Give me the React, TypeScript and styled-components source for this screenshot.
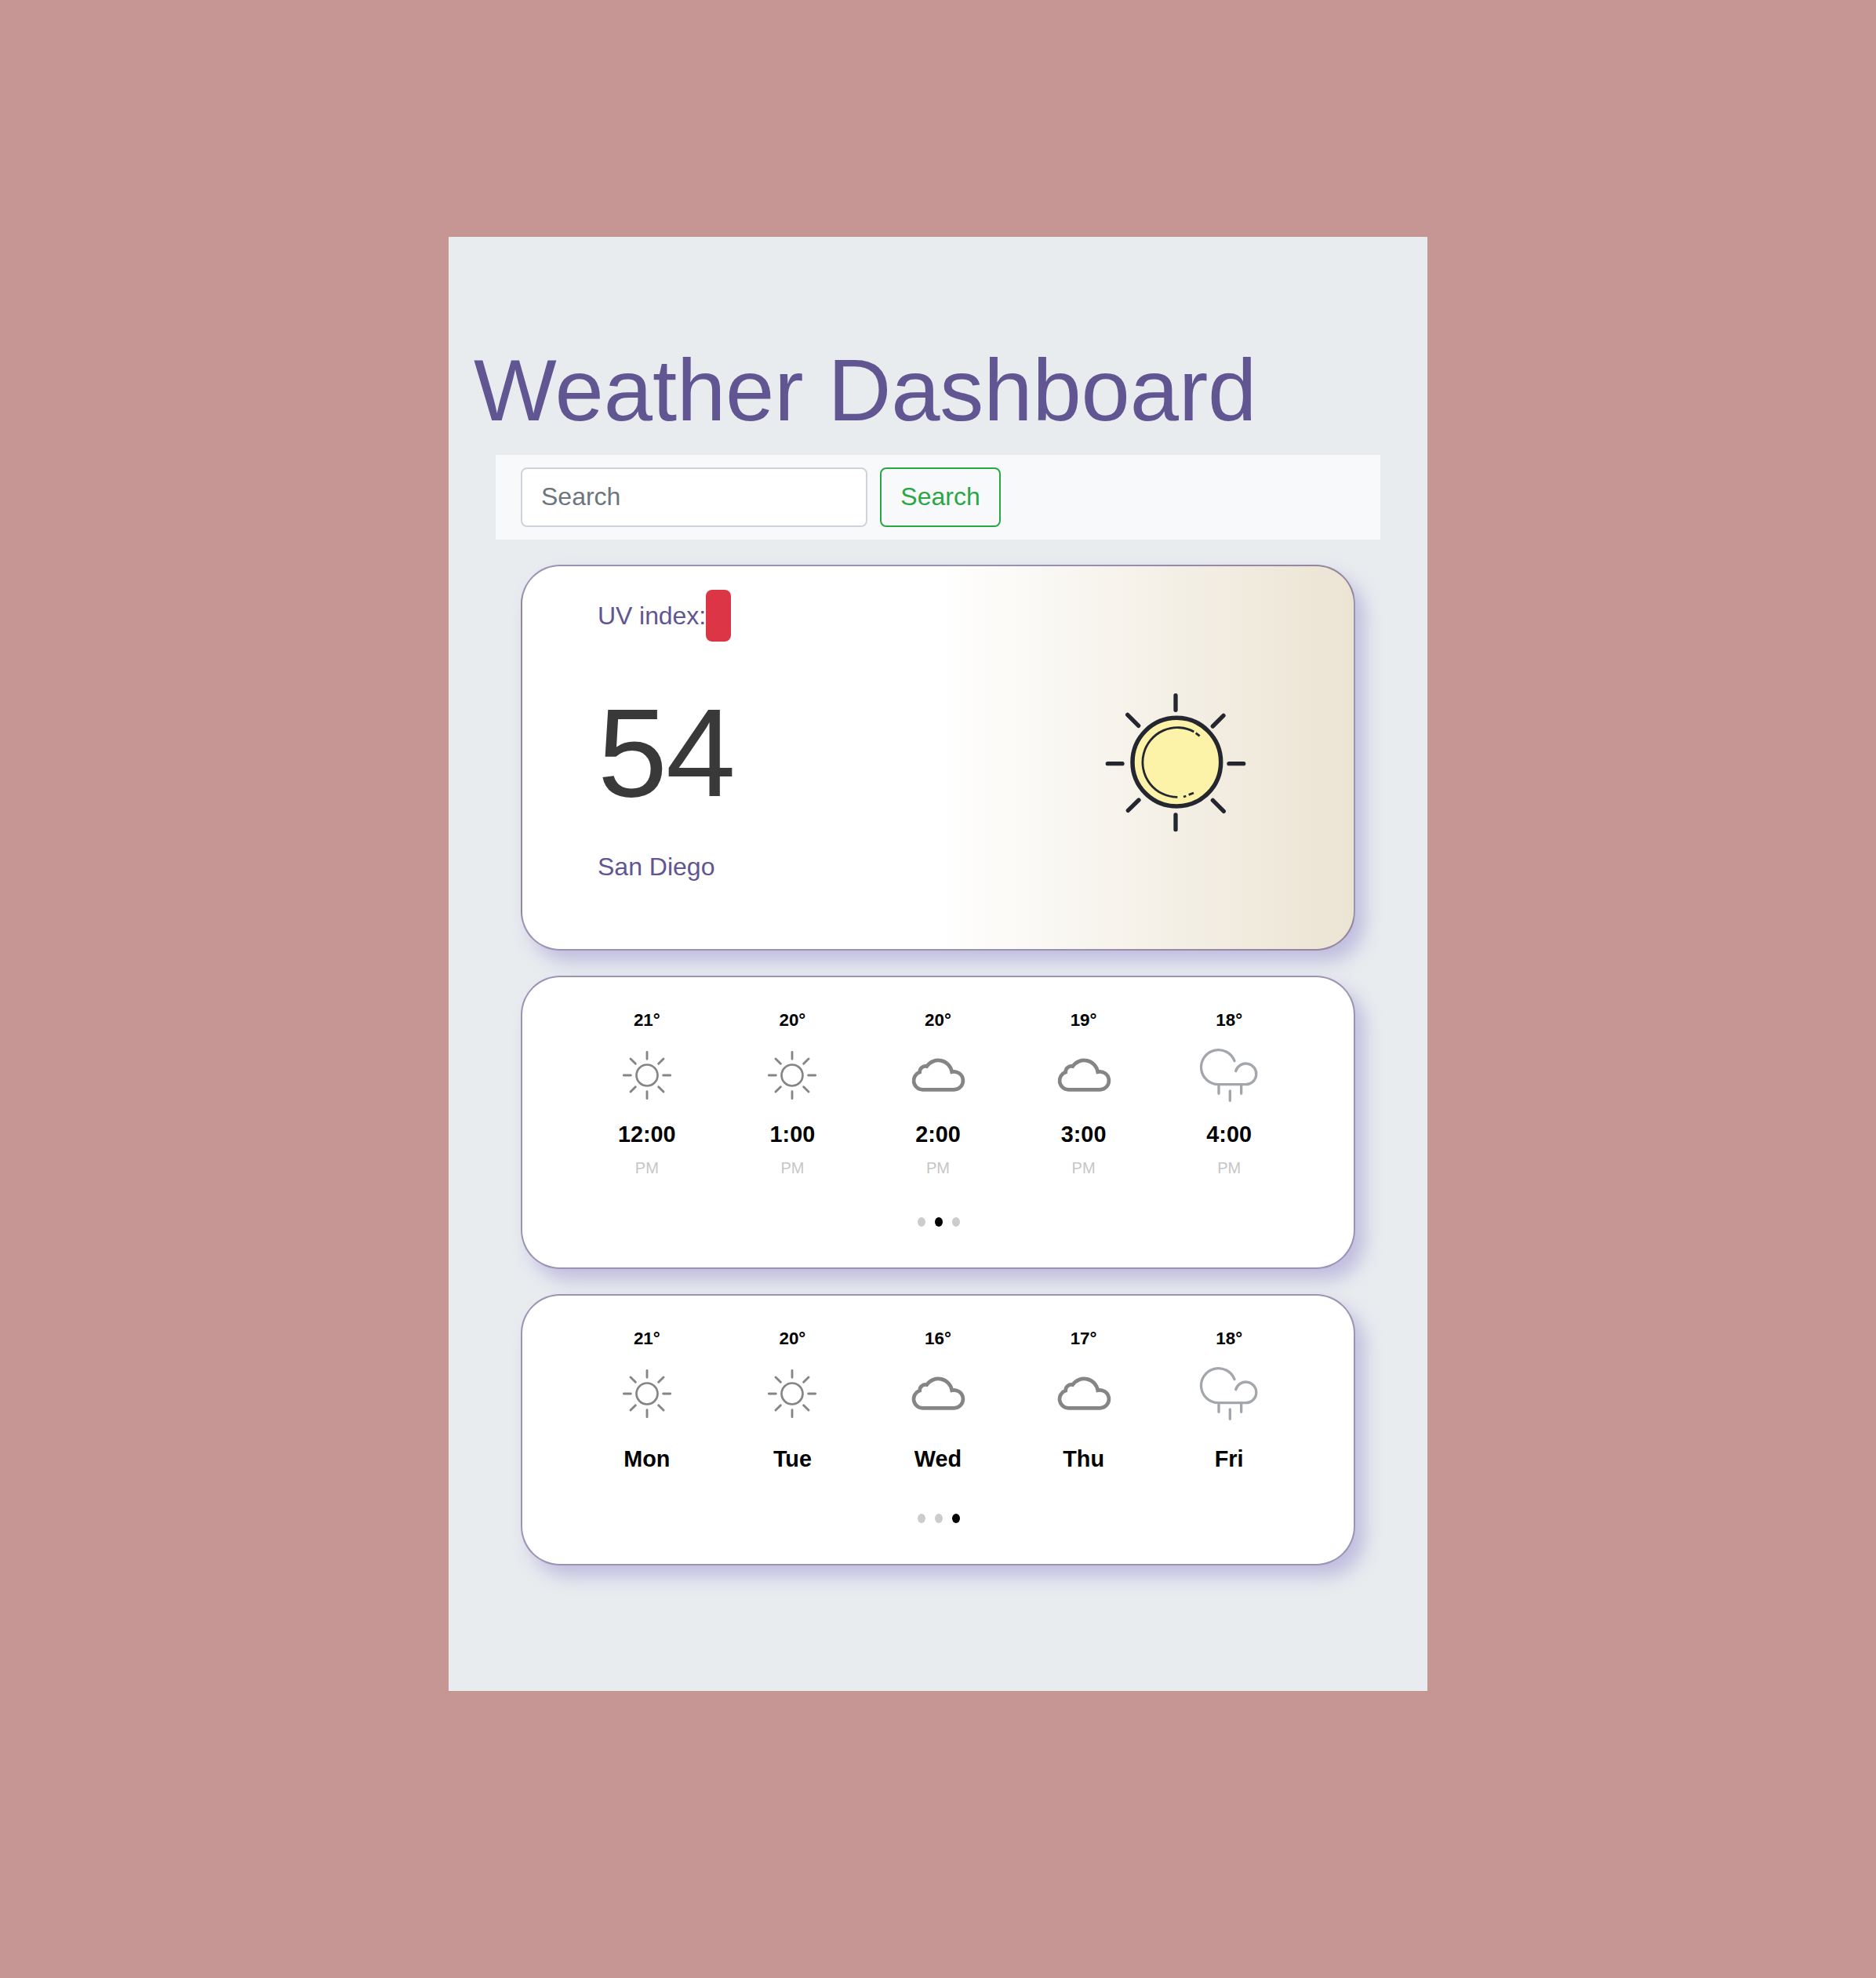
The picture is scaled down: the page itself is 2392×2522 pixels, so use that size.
import React from "react";
import styled, { createGlobalStyle } from "styled-components";

const GlobalStyle = createGlobalStyle`
  *, *::before, *::after { box-sizing: border-box; }
  body {
    margin: 0;
    background: #c69695;
    font-family: "Liberation Sans", Arial, sans-serif;
  }
`;

const Page = styled.div`
  min-height: 2522px;
  padding-top: 302px;
  background: #c69695;
`;

const Panel = styled.main`
  width: 1248px;
  height: 1854px;
  margin: 0 auto;
  padding: 128px 32px 0;
  background: #e8ecef;
`;

const Title = styled.h1`
  margin: 0 0 14px;
  font-size: 112px;
  font-weight: 400;
  line-height: 136px;
  letter-spacing: -0.12px;
  color: #615592;
  white-space: nowrap;
`;

const SearchBar = styled.form`
  display: flex;
  align-items: center;
  gap: 16px;
  width: 1128px;
  height: 108px;
  margin: 0 0 32px 28px;
  padding: 16px 32px;
  background: #f8f9fb;
`;

const SearchInput = styled.input`
  width: 442px;
  height: 76px;
  padding: 11px 24px 13px;
  border: 2px solid #ced4da;
  border-radius: 8px;
  background: #fff;
  font: 400 32px/48px "Liberation Sans", Arial, sans-serif;
  color: #495057;
  &::placeholder {
    color: #6c757d;
    opacity: 1;
  }
`;

const SearchButton = styled.button`
  width: 154px;
  height: 76px;
  padding: 0 0 2px;
  border: 2px solid #28a745;
  border-radius: 8px;
  background: transparent;
  font: 400 32px/48px "Liberation Sans", Arial, sans-serif;
  color: #28a745;
`;

const Card = styled.section<{ $height: number }>`
  width: 1064px;
  height: ${(p) => p.$height}px;
  margin: 0 0 32px 60px;
  border: 2px solid rgba(55, 42, 105, 0.5);
  border-radius: 50px;
  background-color: #fff;
  box-shadow: 12px 14px 22px rgba(134, 120, 200, 0.4);
`;

const CurrentCard = styled(Card)`
  display: flex;
  justify-content: space-between;
  padding: 30px 106px 0 96px;
  background-image: linear-gradient(to right, #fff 50%, #ece4d3);
`;

const CurrentInfo = styled.div`
  display: flex;
  flex-direction: column;
`;

const UvRow = styled.div`
  display: flex;
  align-items: center;
  height: 66px;
  font-size: 32px;
  line-height: 36px;
  letter-spacing: -0.08px;
  color: #615592;
`;

const UvBadge = styled.span`
  width: 32px;
  height: 66px;
  border-radius: 8px;
  background: #dc3545;
`;

const CurrentTemp = styled.div`
  margin-top: 52px;
  font-size: 160px;
  line-height: 180px;
  letter-spacing: -2px;
  color: #393939;
`;

const City = styled.div`
  margin-top: 37px;
  font-size: 32px;
  line-height: 36px;
  color: #615592;
`;

const HeroIcon = styled.svg`
  width: 240px;
  height: 220px;
  margin-top: 108px;
`;

const ForecastCard = styled(Card)`
  display: flex;
  flex-direction: column;
  align-items: center;
  padding-top: 42px;
`;

const Columns = styled.div`
  display: grid;
  grid-template-columns: repeat(5, 185.6px);
`;

const Column = styled.div`
  display: flex;
  flex-direction: column;
  align-items: center;
`;

const Temp = styled.div`
  font-size: 22.4px;
  font-weight: 700;
  line-height: 26px;
  color: #000;
`;

const Icon = styled.svg`
  width: 80px;
  height: 80px;
  margin-top: 17px;
  fill: none;
`;

const Label = styled.div<{ $gap: number }>`
  margin-top: ${(p) => p.$gap}px;
  font-size: 28.8px;
  font-weight: 700;
  line-height: 34px;
  color: #000;
`;

const Meridiem = styled.div`
  margin-top: 14px;
  font-size: 20px;
  line-height: 24px;
  color: #c6c6c6;
`;

const Dots = styled.div<{ $gap: number }>`
  display: flex;
  gap: 12px;
  margin-top: ${(p) => p.$gap}px;
  padding-left: 2px;
`;

const Dot = styled.span<{ $active: boolean }>`
  width: 10px;
  height: 12px;
  border-radius: 50%;
  background: ${(p) => (p.$active ? "#000" : "#ccc")};
`;

type Weather = "sun" | "cloud" | "rain";

function WeatherIcon({ kind }: { kind: Weather }) {
  if (kind === "sun") {
    return (
      <Icon viewBox="75 183 240 240" stroke="#858585" strokeWidth={8.5} strokeLinecap="round">
        <circle cx="195" cy="303" r="40.5" strokeWidth={8} />
        <path d="M195 214V241M195 365V392M106 303H133M257 303H284M132 240L151 259M258 240L239 259M132 366L151 347M258 366L239 347" />
      </Icon>
    );
  }
  if (kind === "cloud") {
    return (
      <Icon viewBox="108 183 240 240" stroke="#858585" strokeWidth={14}>
        <path d="M169 358A34.5 34.5 0 0 1 158 291A22 22 0 0 1 185 269A53 53 0 0 1 281 290A34.5 34.5 0 1 1 289 358Z" />
      </Icon>
    );
  }
  return (
    <Icon viewBox="142 183 240 240" stroke="#a3a7ac" strokeWidth={10} strokeLinecap="round">
      <path d="M283 248A66 66 0 1 0 222 338H325A40 40 0 1 0 288 287M223 341V373M309 341V373M266 363V400" />
    </Icon>
  );
}

function HeroSun() {
  return (
    <HeroIcon viewBox="0 0 720 660" fill="none" stroke="#252730" strokeLinecap="round">
      <circle cx="361" cy="335" r="169" fill="#fcf3a8" strokeWidth="16.5" />
      <path
        strokeWidth="16"
        d="M357 80V136M357 537V593M97 341H153M561 341H617M173 154L215 196M540 157L499 198M175 520L216 480M499 481L541 523"
      />
      <path
        strokeWidth="8.5"
        strokeLinecap="butt"
        d="M364 469A133 133 0 1 1 427 219M434 224L449 235M387 468L397 465M407 460L426 453"
      />
    </HeroIcon>
  );
}

type Entry = { temp: string; icon: Weather; label: string; meridiem?: string };

const hourly: Entry[] = [
  { temp: "21°", icon: "sun", label: "12:00", meridiem: "PM" },
  { temp: "20°", icon: "sun", label: "1:00", meridiem: "PM" },
  { temp: "20°", icon: "cloud", label: "2:00", meridiem: "PM" },
  { temp: "19°", icon: "cloud", label: "3:00", meridiem: "PM" },
  { temp: "18°", icon: "rain", label: "4:00", meridiem: "PM" },
];

const daily: Entry[] = [
  { temp: "21°", icon: "sun", label: "Mon" },
  { temp: "20°", icon: "sun", label: "Tue" },
  { temp: "16°", icon: "cloud", label: "Wed" },
  { temp: "17°", icon: "cloud", label: "Thu" },
  { temp: "18°", icon: "rain", label: "Fri" },
];

type ForecastProps = {
  entries: Entry[];
  height: number;
  labelGap: number;
  dotsGap: number;
  active: number;
};

function Forecast({ entries, height, labelGap, dotsGap, active }: ForecastProps) {
  return (
    <ForecastCard $height={height}>
      <Columns>
        {entries.map((e) => (
          <Column key={e.label}>
            <Temp>{e.temp}</Temp>
            <WeatherIcon kind={e.icon} />
            <Label $gap={labelGap}>{e.label}</Label>
            {e.meridiem && <Meridiem>{e.meridiem}</Meridiem>}
          </Column>
        ))}
      </Columns>
      <Dots $gap={dotsGap}>
        {[0, 1, 2].map((i) => (
          <Dot key={i} $active={i === active} />
        ))}
      </Dots>
    </ForecastCard>
  );
}

export default function App() {
  return (
    <Page>
      <GlobalStyle />
      <Panel>
        <Title>Weather Dashboard</Title>
        <SearchBar onSubmit={(e) => e.preventDefault()}>
          <SearchInput type="search" placeholder="Search" aria-label="Search" />
          <SearchButton type="submit">Search</SearchButton>
        </SearchBar>
        <CurrentCard $height={492}>
          <CurrentInfo>
            <UvRow>
              UV index:
              <UvBadge />
            </UvRow>
            <CurrentTemp>54</CurrentTemp>
            <City>San Diego</City>
          </CurrentInfo>
          <HeroSun />
        </CurrentCard>
        <Forecast entries={hourly} height={374} labelGap={18} dotsGap={51} active={1} />
        <Forecast entries={daily} height={346} labelGap={26} dotsGap={53} active={2} />
      </Panel>
    </Page>
  );
}
